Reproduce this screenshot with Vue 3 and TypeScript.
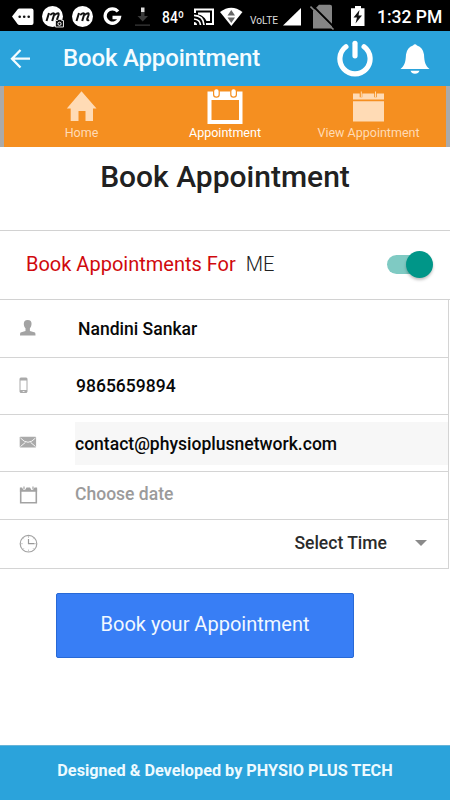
<script setup lang="ts">
import { ref } from 'vue'

const forMe = ref(true)
const activeTab = ref('Appointment')
const tabs = ['Home', 'Appointment', 'View Appointment']
</script>

<template>
  <main class="screen">
    <div class="status">
      <svg class="s-more" width="22" height="31" viewBox="12 0 22 31">
        <path d="M12 15.500L17.500 8.500Q18.200 7.500 19.500 7.500H31.500Q33.500 7.500 33.500 9.500V22Q33.500 24 31.500 24H19.500Q18.200 24 17.500 23Z" fill="#fff" />
        <g fill="#111"><circle cx="19.700" cy="15.800" r="1.300" /><circle cx="24.200" cy="15.800" r="1.300" /><circle cx="28.700" cy="15.800" r="1.300" /></g>
      </svg>
      <svg class="s-cam" width="23" height="31" viewBox="42 0 23 31">
        <circle cx="52.500" cy="15.500" r="10.500" fill="#fff" />
        <path d="M46.500 20L49 12M50.200 14Q54.500 10.700 54 14L52.200 20M54.600 14Q59.500 10.500 58.500 14.300L57.200 18Q57 20 59 18.800" fill="none" stroke="#111" stroke-width="2" />
        <path d="M55.500 19.500H57.500L58.300 18.500H61L61.800 19.500H63.500V26H55.500Z" fill="#111" stroke="#ddd" stroke-width="1" />
        <circle cx="59.500" cy="22.800" r="1.600" fill="none" stroke="#fff" stroke-width="1" />
      </svg>
      <svg class="s-m" width="22" height="31" viewBox="72 0 22 31">
        <circle cx="82.500" cy="15.500" r="10.500" fill="#fff" />
        <path d="M76.500 20L79 12M80.200 14Q84.500 10.700 84 14L82.200 20M84.600 14Q89.500 10.500 88.500 14.300L87.200 18Q87 20 89 18.800" fill="none" stroke="#111" stroke-width="2" />
      </svg>
      <svg class="s-g" width="20" height="31" viewBox="103 0 20 31">
        <path d="M118 10.500A7.200 7.200 0 1 0 119.400 16.500H112.500" fill="none" stroke="#fff" stroke-width="3.300" />
      </svg>
      <svg class="s-down" width="17" height="31" viewBox="134 0 17 31">
        <path d="M141 6.500H144.500V11H141Z" fill="#ddd" />
        <path d="M141 11H144.500V15H148L142.700 20.500L137.500 15H141ZM135 23.500H150V24.800H135Z" fill="#3a3a3a" />
      </svg>
      <span class="temp">84º</span>
      <svg class="s-cast" width="21" height="31" viewBox="194 0 21 31">
        <path d="M195 12V8.500H213V23H206" fill="none" stroke="#fff" stroke-width="2" />
        <path d="M198 11.500H210V20H206.500Q203.500 14 198 13.500Z" fill="#fff" />
        <path d="M194 14.300Q203.500 14.500 204 24M194 18Q200 18.500 200.500 24" fill="none" stroke="#fff" stroke-width="1.700" />
        <path d="M194 21V24H197Q197 21.300 194 21Z" fill="#fff" />
      </svg>
      <svg class="s-wifi" width="23" height="31" viewBox="220 0 23 31">
        <path d="M220 11Q231.300 2.500 242.500 11L231.300 25Z" fill="#fff" />
        <path d="M227.500 14.500L231.300 9L235 14.500ZM227.500 16.500H235L231.300 22Z" fill="#666" />
      </svg>
      <span class="volte">VoLTE</span>
      <svg class="s-signal" width="18" height="31" viewBox="283 0 18 31"><path d="M283 24.500L301 7V24.500Z" fill="#fff" /></svg>
      <svg class="s-sim" width="25" height="31" viewBox="310 0 25 31">
        <path d="M319 3.800H330Q332 3.800 332 5.500V27.500H313V10Z" fill="#858585" />
        <path d="M312.500 4.500L335 27" stroke="#000" stroke-width="1.800" />
        <path d="M310.500 5.500L333.500 28.500" stroke="#858585" stroke-width="1.600" />
      </svg>
      <svg class="s-batt" width="14" height="31" viewBox="351 0 14 31">
        <path d="M351 7.200H355V5H361V7.200H364.500V25H351Z" fill="#fff" />
        <path d="M359.500 9L353.500 16.500H357L355.500 22.500L362 14.500H358.500Z" fill="#111" />
      </svg>
      <span class="time">1:32 PM</span>
    </div>

    <header class="appbar">
      <svg class="back" width="20" height="22" viewBox="10 48 20 22"><path d="M20.500 50L12 58.700L20.500 67.500M12 58.700H30" fill="none" stroke="#f4fcff" stroke-width="2.300" /></svg>
      <h1>Book Appointment</h1>
      <svg class="power" width="36" height="38" viewBox="337 40 36 38">
        <path d="M345.900 46.800A15.100 15.100 0 1 0 364.100 46.800" fill="none" stroke="#fff" stroke-width="5.200" stroke-linecap="round" />
        <path d="M355 43.300V55.800" stroke="#fff" stroke-width="5.200" stroke-linecap="round" />
      </svg>
      <svg class="bell" width="30" height="32" viewBox="400 42 30 32">
        <path d="M413 44.500Q415 42 417 44.500Q423 46.500 424 53.500C424.400 61.500 425.500 64.500 429.500 68H400.500C404.500 64.500 405.600 61.500 406 53.500Q407 46.500 413 44.500ZM410.500 69.700H419.500Q418.500 72.700 415 72.700Q411.500 72.700 410.500 69.700Z" fill="#fff" />
      </svg>
    </header>

    <nav class="tabs">
      <button v-for="tab in tabs" :key="tab" type="button" class="tab" :class="{ active: activeTab === tab }" @click="activeTab = tab">
        <svg v-if="tab === 'Home'" width="40" height="38" viewBox="62 86 40 38">
          <path d="M81.500 91.300L96.500 108.500H93V121H85.500V111H78.500V121H70.700V108.500H66.800Z" fill="currentColor" />
        </svg>
        <svg v-else-if="tab === 'Appointment'" width="40" height="38" viewBox="205 86 40 38">
          <path fill-rule="evenodd" d="M207.500 91.500H242.500V124H207.500ZM211.500 100V120H239V100Z" fill="currentColor" />
          <g fill="#fff" stroke="#f58f20" stroke-width="1.200"><rect x="213.600" y="88.700" width="5.600" height="8.500" rx="2.600" /><rect x="230.800" y="88.700" width="5.600" height="8.500" rx="2.600" /></g>
        </svg>
        <svg v-else width="40" height="38" viewBox="349 86 40 38">
          <path d="M353 93.500H384V99.500H353ZM353 101.200H384V121.500H353Z" fill="currentColor" />
          <path d="M361 91V97.300M375.500 91V97.300" stroke="#f58f20" stroke-width="2.600" /><path d="M361.300 91.500V97M375.500 91.500V97" stroke="#ffdbb0" stroke-width="1" />
        </svg>
        <span>{{ tab }}</span>
      </button>
    </nav>

    <h2>Book Appointment</h2>

    <section class="for-row">
      <span class="for-label">Book Appointments For</span>
      <span class="for-value">ME</span>
      <button type="button" class="switch" :class="{ on: forMe }" @click="forMe = !forMe"><i /></button>
    </section>

    <form class="form" @submit.prevent>
      <div class="row name">
        <svg width="19" height="18" viewBox="19 319 19 18"><path d="M27.700 320C33.500 320 31.500 327 29.900 328.300V331L35 332.500Q35.500 333 35.500 335.500H20Q20 333 20.500 332.500L25.500 331V328.300C23.800 327 22 320 27.700 320Z" fill="#a3a3a3" /></svg>
        <span>Nandini Sankar</span>
      </div>
      <div class="row phone">
        <svg width="19" height="18" viewBox="19 376.500 19 18"><rect x="20" y="377.500" width="7" height="14.500" rx=".8" fill="#fff" stroke="#aaa" /><path d="M20 377.500H27V380H20ZM20 389.500H27V392H20Z" fill="#aaa" /><path d="M22.700 391H24.500" stroke="#fff" stroke-width=".8" /></svg>
        <span>9865659894</span>
      </div>
      <div class="row email">
        <svg width="19" height="18" viewBox="19 434 19 18"><rect x="19.700" y="436.800" width="16.400" height="10.800" rx=".8" fill="#aaa" /><path d="M20.500 438Q28 446.500 35.500 438M20.500 446.500L25.500 442.300M35.500 446.500L30.500 442.300" fill="none" stroke="#f4f4f4" stroke-width="1" /></svg>
        <span>contact@physioplusnetwork.com</span>
      </div>
      <div class="row date">
        <svg width="19" height="20" viewBox="19 486 19 20"><path d="M20.700 488.500V502.800H36.300V488.500" fill="none" stroke="#a3a3a3" stroke-width="1.600" /><path d="M19.900 487.500H22L23.500 490H25L26.500 487.500H30L31.500 490H33L34.500 487.500H37.100V491.700H19.900Z" fill="#a3a3a3" /><path d="M24 486.500V489.500M33 486.500V489.500" stroke="#a3a3a3" stroke-width="1.200" /></svg>
        <span>Choose date</span>
      </div>
      <div class="row when">
        <svg width="19" height="20" viewBox="19 534 19 20"><circle cx="28.500" cy="543.700" r="8.300" fill="none" stroke="#a3a3a3" stroke-width="1.200" /><path d="M28.500 539V543.700H34.500" fill="none" stroke="#999" stroke-width="1.200" /><path d="M28.500 536V538M28.500 549.500V551.500M20.800 543.700H22.800M34.500 543.700H36M23 538.200L24 539.200M33 548.200L34 549.200M34 538.200L33 539.200M24 548.200L23 549.200" stroke="#bbb" stroke-width=".8" /></svg>
        <span>Select Time</span>
        <i class="caret" />
      </div>
    </form>

    <button type="button" class="submit"><span>Book your Appointment</span></button>

    <footer><span>Designed &amp; Developed by PHYSIO PLUS TECH</span></footer>
  </main>
</template>

<style>
body { margin: 0; background: #fff; }
</style>

<style scoped>
* { box-sizing: border-box; }
svg { display: block; flex: none; }
button { border: 0; padding: 0; font-family: inherit; }
.screen {
  width: 450px;
  height: 800px;
  display: flex;
  flex-direction: column;
  overflow: hidden;
  background: #fff;
  color: #212121;
  font-family: Roboto, sans-serif;
  white-space: nowrap;
}
.status {
  height: 31px;
  flex: none;
  display: grid;
  grid-template-columns: 30px 30px 31px 31px 28px 32px 26px 30px 33px 27px 41px 26px 70px;
  padding-left: 12px;
  align-items: center;
  background: #000;
  color: #fff;
}
.temp { font-size: 16.500px; font-weight: 500; line-height: 31px; padding-top: 2px; transform: scaleX(.84); transform-origin: left; }
.volte { font-size: 10.200px; line-height: 12px; padding-top: 8px; color: #ddd; }
.time { font-size: 17.500px; font-weight: 500; line-height: 31px; padding-top: 1px; }
.appbar {
  height: 55px;
  flex: none;
  display: flex;
  align-items: center;
  padding: 0 20px 0 10px;
  background: #2ba3db;
  color: #f4fcff;
}
h1 { flex: 1; margin: 0 0 2px 33px; font-size: 24px; letter-spacing: -.17px; font-weight: 500; line-height: 30px; }
.bell { margin-left: 27px; }
.tabs {
  height: 61px;
  flex: none;
  display: grid;
  grid-template-columns: 155px 132px 155px;
  justify-content: center;
  border: 0 solid #aaa;
  border-left-width: 4px;
  border-right-width: 4px;
  background: #f58f20;
}
.tab {
  display: flex;
  flex-direction: column;
  align-items: center;
  background: none;
  color: #ffdbb5;
  font-size: 12.500px;
}
.tab span { line-height: 16px; margin-top: 1px; }
.tab.active { color: #fff; }
h2 { margin: 9px 0 0; height: 74px; flex: none; font-size: 30px; line-height: 42px; font-weight: 500; text-align: center; }
.for-row {
  height: 70px;
  flex: none;
  display: flex;
  align-items: center;
  padding: 0 17px 2px 26px;
  border: 0 solid #d2d2d2;
  border-top-width: 1px;
  border-bottom-width: 1px;
  font-size: 20px;
}
.for-label { color: #d0090d; }
.for-value { flex: 1; margin-left: 10px; font-weight: 300; }
.switch { width: 46px; height: 19px; display: flex; align-items: center; border-radius: 10px; background: linear-gradient(90deg, #7fcac3 35px, transparent 35px); }
.switch i { width: 27px; height: 27px; border-radius: 50%; background: #9a9a9a; box-shadow: 0 2px 3px rgba(0, 0, 0, .25); }
.switch.on { justify-content: flex-end; }
.switch.on i { background: #009688; }
.form { width: 449px; flex: none; border-right: 1px solid #d4d4d4; }
.row { display: flex; align-items: center; padding-left: 19px; border-bottom: 1px solid #d4d4d4; font-size: 17.550px; font-weight: 500; color: #080808; }
.row svg { margin-right: 37px; }
.name { height: 58px; }
.name svg { margin-bottom: 2px; }
.name span { margin-left: 3px; }
.phone { height: 57px; }
.phone svg { margin-bottom: 1px; }
.phone span { margin-left: 1px; }
.email { height: 57px; }
.email span { flex: 1; height: 43px; line-height: 44px; background: #f7f7f7; }
.date { height: 48px; }
.date span { color: #9b9b9b; padding-bottom: 3px; }
.when { height: 49px; color: #2b2b2b; }
.when span { margin-left: auto; padding-bottom: 2px; }
.caret { margin: 0 21px 2px 28px; border: 6px solid transparent; border-top-color: #8a8a8a; border-bottom: 0; }
.submit {
  width: 298px;
  height: 65px;
  flex: none;
  margin: 24px 0 0 56px;
  border: 1px solid #2869d6;
  border-radius: 2px;
  background: #387ef5;
  color: #f1f8ff;
  font-size: 20px;
  padding-bottom: 3px;
}
footer {
  height: 55px;
  flex: none;
  margin-top: auto;
  border-top: 1px solid #66b4d8;
  background: #2ba3db;
  color: #edfaff;
  font-size: 16.250px;
  font-weight: 700;
  line-height: 49px;
  text-align: center;
}
</style>
